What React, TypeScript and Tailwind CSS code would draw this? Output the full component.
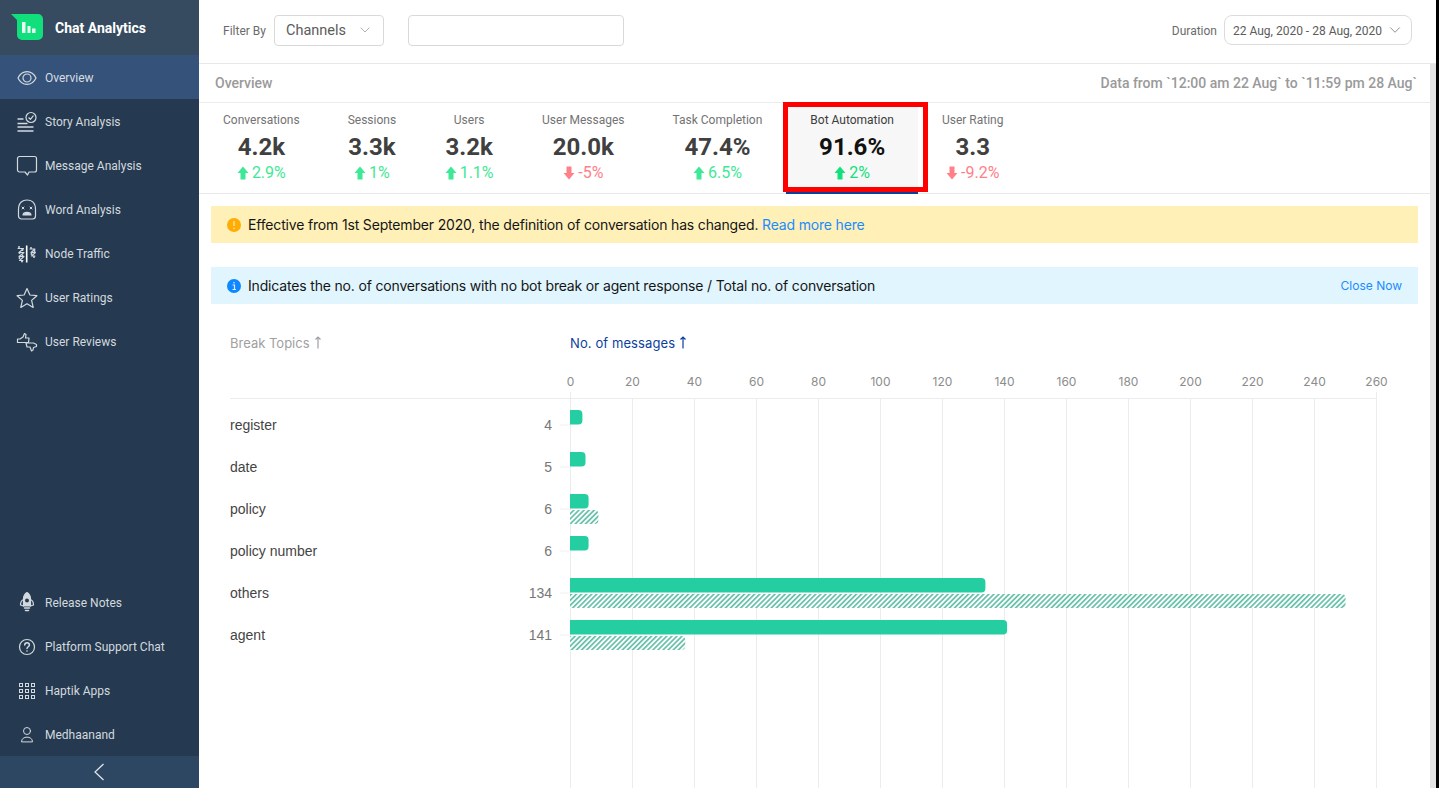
import React from "react";
import { ChevronDown } from "lucide-react";

const stroke = "#d3d9df";

function NavIcon({ children }: { children: React.ReactNode }) {
  return (
    <svg width="22" height="22" viewBox="0 0 22 22" fill="none" stroke={stroke} strokeWidth="1.2" strokeLinecap="round" strokeLinejoin="round" className="shrink-0">
      {children}
    </svg>
  );
}

const EyeIcon = () => (
  <NavIcon>
    <path d="M2 11 C6 2.500 16 2.500 20 11 C16 19.500 6 19.500 2 11Z" />
    <circle cx="11" cy="11" r="4" />
  </NavIcon>
);

const StoryIcon = () => (
  <NavIcon>
    <path d="M1.500 8h6M1.500 12.500h10M1.500 16h16M1.500 20h16" strokeWidth="1.600" strokeLinecap="butt" />
    <circle cx="15" cy="6.500" r="5" />
    <path d="M12.800 6.800l1.600 1.500 2.800-3.400" />
  </NavIcon>
);

const MessageIcon = () => (
  <NavIcon>
    <path d="M3.500 1.500H18.500a2 2 0 0 1 2 2V15a2 2 0 0 1-2 2H13L11.500 20 9 17H3.500a2 2 0 0 1-2-2V3.500a2 2 0 0 1 2-2Z" />
  </NavIcon>
);

const WordIcon = () => (
  <NavIcon>
    <path d="M2.500 10.500C2.500 3 7 1 11 1s8.500 2 8.500 9.500V17a3 3 0 0 1-3 3h-11a3 3 0 0 1-3-3Z" />
    <path d="M6 8l2 2M8 8l-2 2M14 8l2 2M16 8l-2 2" strokeWidth="1" />
    <path d="M7 16c.5-3.500 7.500-3.500 8 0Z" fill={stroke} />
  </NavIcon>
);

const NodeIcon = () => (
  <NavIcon>
    <path d="M10.700 2.500V19.500" strokeWidth="1.600" stroke="#ffffff" strokeLinecap="butt" />
    <path d="M2 5.500h5.500L3 9.500h5L3 13.500h5L3.500 17.500H7M14 6h5l-4 3.500h4.500l-4 3.500H19" strokeWidth="1.100" />
    {[[3, 4], [6.500, 7], [3.500, 10], [6.500, 12.500], [3.500, 15], [6, 18.500], [15, 5], [18.500, 8], [15.500, 11], [18, 14]].map(([cx, cy]) => (
      <circle key={`${cx}-${cy}`} cx={cx} cy={cy} r="1" fill={stroke} stroke="none" />
    ))}
  </NavIcon>
);

const StarIcon = () => (
  <NavIcon>
    <path d="M11 1.500l2.900 6.500 7 .7-5.300 4.700 1.600 7-6.200-3.700-6.200 3.700 1.600-7-5.300-4.700 7-.7Z" />
  </NavIcon>
);

const ReviewIcon = () => (
  <NavIcon>
    <path d="M1.500 8h2.500l3-2 1.500-3.500 1.500 1-.5 3.500h3.500l-.5 4.500H4L1.500 11.500Z" />
    <path d="M20.500 13.500l-3-1.500H10l1 4h3l1.500 4 1.500-1 .5-2.500 3-1Z" />
  </NavIcon>
);

const RocketIcon = () => (
  <NavIcon>
    <path d="M11 .5c2.500 1.500 3.500 4 3.500 6.500v7h-7V7c0-2.500 1-5 3.500-6.500Z" fill={stroke} />
    <path d="M7.500 7.500c-2.500 1-3 3-3 5.500l3 1M14.500 7.500c2.500 1 3 3 3 5.500l-3 1" />
    <circle cx="11" cy="8.500" r="2" fill="#253a50" stroke="none" />
    <path d="M8.500 16h5M9.500 18.500h3" strokeWidth="1.500" />
  </NavIcon>
);

const HelpIcon = () => (
  <NavIcon>
    <circle cx="11" cy="11" r="7.500" />
    <path d="M8.700 9c0-3 4.700-3 4.700 0 0 1.700-2.400 1.800-2.400 3.500" strokeWidth="1.500" />
    <circle cx="11" cy="15" r=".8" fill={stroke} stroke="none" />
  </NavIcon>
);

const GridIcon = () => (
  <NavIcon>
    {[3.500, 9.500, 15.500].map((y) =>
      [3.500, 9.500, 15.500].map((x) => <rect key={`${x}-${y}`} x={x} y={y} width="3" height="3" strokeWidth="1" strokeLinejoin="miter" />)
    )}
  </NavIcon>
);

const UserIcon = () => (
  <NavIcon>
    <circle cx="11" cy="7" r="3.500" strokeWidth="1" />
    <path d="M5.500 17.500c0-6 11-6 11 0Z" strokeWidth="1" />
  </NavIcon>
);

const topNav = [
  { label: "Story Analysis", icon: <StoryIcon /> },
  { label: "Message Analysis", icon: <MessageIcon /> },
  { label: "Word Analysis", icon: <WordIcon /> },
  { label: "Node Traffic", icon: <NodeIcon /> },
  { label: "User Ratings", icon: <StarIcon /> },
  { label: "User Reviews", icon: <ReviewIcon /> },
];

const bottomNav = [
  { label: "Release Notes", icon: <RocketIcon /> },
  { label: "Platform Support Chat", icon: <HelpIcon /> },
  { label: "Haptik Apps", icon: <GridIcon /> },
  { label: "Medhaanand", icon: <UserIcon /> },
];

function NavRow({ label, icon, active }: { label: string; icon: React.ReactNode; active?: boolean }) {
  return (
    <div className={active ? "flex h-11 items-center gap-[7px] bg-[#34527a] pt-[2px] pl-4 text-xs text-[#d8dde3]" : "flex h-11 items-center gap-[7px] pt-[2px] pl-4 text-xs text-[#d3d9df]"}>
      {icon}
      <span>{label}</span>
    </div>
  );
}

function Sidebar() {
  return (
    <aside className="flex h-full w-[199px] shrink-0 flex-col bg-[#253a50]">
      <div className="flex h-[55px] items-center gap-[11px] bg-[#364b5f] pl-[11px]">
        <svg width="33" height="28" viewBox="0 0 33 28" className="shrink-0">
          <path d="M0 0H27a5 5 0 0 1 5 5V21a5 5 0 0 1-5 5H11a5 5 0 0 1-5-5V6Z" fill="#10df7c" />
          <path d="M11 8h3.500v11H11ZM16.500 12h3v7h-3ZM21 14.500h3.500V19H21Z" fill="#e9fff4" />
        </svg>
        <span className="text-sm font-bold text-white">Chat Analytics</span>
      </div>
      <NavRow label="Overview" icon={<EyeIcon />} active />
      {topNav.map((item) => (
        <NavRow key={item.label} label={item.label} icon={item.icon} />
      ))}
      <div className="flex-1" />
      {bottomNav.map((item) => (
        <NavRow key={item.label} label={item.label} icon={item.icon} />
      ))}
      <div className="flex h-8 items-center justify-center bg-[#2d4762] pr-[2px]">
        <svg width="12" height="18" viewBox="0 0 12 18" fill="none" stroke="#e4e8ec" strokeWidth="1.2">
          <path d="M10.500 1L2 9l8.500 8" />
        </svg>
      </div>
    </aside>
  );
}

function Arrow({ up, color }: { up: boolean; color: string }) {
  return (
    <svg width="12" height="14" viewBox="0 0 12 14" className="shrink-0">
      <path d={up ? "M6 0.500L11.500 7H8.500V13.500H3.500V7H0.500Z" : "M6 13.500L11.500 7H8.500V0.500H3.500V7H0.500Z"} fill={color} />
    </svg>
  );
}

const kpis = [
  { label: "Conversations", value: "4.2k", delta: "2.9%", up: true },
  { label: "Sessions", value: "3.3k", delta: "1%", up: true },
  { label: "Users", value: "3.2k", delta: "1.1%", up: true },
  { label: "User Messages", value: "20.0k", delta: "-5%", up: false },
  { label: "Task Completion", value: "47.4%", delta: "6.5%", up: true },
  { label: "Bot Automation", value: "91.6%", delta: "2%", up: true, active: true },
  { label: "User Rating", value: "3.3", delta: "-9.2%", up: false },
];

function Kpi({ label, value, delta, up, active }: { label: string; value: string; delta: string; up: boolean; active?: boolean }) {
  const color = up ? (active ? "#12e07c" : "#3fe896") : "#ff8089";
  return (
    <div className={active ? "relative flex h-[90px] flex-col items-center bg-[#f7f7f7] px-6 pt-[10px]" : "flex h-[90px] flex-col items-center px-6 pt-[10px]"}>
      <span className={active ? "text-xs leading-[14px] text-[#3c3c3c]" : "text-xs leading-[14px] text-[#737373]"}>{label}</span>
      <span className={active ? "mt-[5px] text-2xl leading-[30px] font-bold text-[#111111]" : "mt-[5px] text-2xl leading-[30px] font-bold text-[#404040]"}>{value}</span>
      <span className="mt-[3px] flex items-center gap-[3px] px-[0.5px] text-base leading-[16px]" style={{ color }}>
        <Arrow up={up} color={color} />
        {delta}
      </span>
      {active && (
        <>
          <div className="absolute right-0 bottom-[-1px] left-0 h-[2px] bg-[#0b3f9e]" />
          <div className="absolute top-[-1px] right-[-10px] bottom-[1px] left-[-3px] border-[5px] border-[#ff0000]" />
        </>
      )}
    </div>
  );
}

function SortArrow({ color }: { color: string }) {
  return (
    <svg width="8" height="13" viewBox="0 0 8 13" fill="none" stroke={color} strokeWidth="1.200" className="mb-[3px] ml-[4px] inline-block">
      <path d="M4 12.500V1M1.500 3.500L4 1L6.500 3.500" />
    </svg>
  );
}

const rows = [
  { label: "register", count: 4, prev: 0 },
  { label: "date", count: 5, prev: 0 },
  { label: "policy", count: 6, prev: 9 },
  { label: "policy number", count: 6, prev: 0 },
  { label: "others", count: 134, prev: 250 },
  { label: "agent", count: 141, prev: 37 },
];

const ticks = Array.from({ length: 14 }, (_, i) => i * 20);
const xOf = (v: number) => 10.5 + v * 3.1;

function barPath(w: number, y: number, h: number) {
  const r = 4;
  return `M10 ${y}H${w - r}a${r} ${r} 0 0 1 ${r} ${r}V${y + h - r}a${r} ${r} 0 0 1 -${r} ${r}H10Z`;
}

function Chart() {
  return (
    <svg width="870" height="418" viewBox="0 0 870 418" className="block shrink-0" fontFamily="Inter, sans-serif">
      <defs>
        <pattern id="hatch" width="3.600" height="3.600" patternUnits="userSpaceOnUse" patternTransform="rotate(45)">
          <rect width="3.600" height="3.600" fill="#ffffff" />
          <rect width="1.700" height="3.600" fill="#66bfa9" />
        </pattern>
      </defs>
      {ticks.map((t) => (
        <g key={t}>
          <line x1={xOf(t)} x2={xOf(t)} y1={t === 0 || t === 260 ? 22 : 28} y2="418" stroke="#ececec" />
          <text x={xOf(t)} y="16" textAnchor="middle" fontSize="12" fill="#8c8c8c">
            {t}
          </text>
        </g>
      ))}
      <line x1="0" x2={xOf(260)} y1="28.500" y2="28.500" stroke="#ececec" />
      {rows.map((r, i) => {
        const top = 40 + i * 42;
        return (
          <g key={r.label}>
            <line x1="0" x2="10" y1={top + 15} y2={top + 15} stroke="#f0f0f0" />
            <path d={barPath(xOf(r.count) - 0.5, top, 14.500)} fill="#25cea0" />
            {r.prev > 0 && <path d={barPath(xOf(r.prev), top + 16, 14)} fill="url(#hatch)" />}
          </g>
        );
      })}
    </svg>
  );
}

function Banner({ className, children }: { className: string; children: React.ReactNode }) {
  return (
    <div className={`${className} mx-3 flex h-[37px] items-center px-4 font-['Inter',sans-serif] text-sm tracking-[-0.17px] text-[#151515]`}>{children}</div>
  );
}

export default function App() {
  return (
    <div className="flex h-[788px] w-[1439px] overflow-hidden bg-black font-['Roboto',sans-serif]">
      <Sidebar />
      <main className="flex h-full w-[1237px] shrink-0 flex-col bg-white">
        <header className="flex h-[64px] shrink-0 items-center border-b border-[#e8e8e8] pr-6 pb-[3px] pl-6">
          <span className="mt-[2px] mr-2 text-xs text-[#6b6b6b]">Filter By</span>
          <div className="flex h-[31px] w-[110px] items-center justify-between rounded border border-[#d9d9d9] pr-[10px] pl-[11px] text-[14.5px] text-[#5c5c5c]">
            <span className="mt-[2px]">Channels</span>
            <ChevronDown size={16} strokeWidth={1} color="#8a8a8a" />
          </div>
          <div className="ml-6 h-[31px] w-[216px] rounded border border-[#d9d9d9]" />
          <div className="flex-1" />
          <span className="mt-[2px] mr-[7px] text-xs text-[#6b6b6b]">Duration</span>
          <div className="flex h-[30px] w-[188px] items-center justify-between rounded-lg border border-[#dcdcdc] pr-[7px] pl-2 text-xs text-[#5c5c5c]">
            <span className="mt-[1px]">22 Aug, 2020 - 28 Aug, 2020</span>
            <ChevronDown size={18} strokeWidth={1} color="#6b6b6b" />
          </div>
        </header>
        <div className="flex min-h-0 flex-1">
          <div className="flex min-w-0 flex-1 flex-col">
            <div className="flex h-[39px] shrink-0 items-center justify-between border-b border-[#ececec] pr-[13px] pl-4 text-sm font-medium text-[#9a9a9a]">
              <span>Overview</span>
              <span>Data from `12:00 am 22 Aug` to `11:59 pm 28 Aug`</span>
            </div>
            <div className="flex h-[91px] shrink-0 border-b border-[#e8e8e8]">
              {kpis.map((k) => (
                <Kpi key={k.label} {...k} />
              ))}
            </div>
            <Banner className="mt-3 bg-[#fff0b8]">
              <svg width="14" height="14" viewBox="0 0 14 14" className="mr-[7px] shrink-0">
                <circle cx="7" cy="7" r="7" fill="#ffac05" />
                <path d="M7 3v5" stroke="#ffe08a" strokeWidth="1.500" />
                <circle cx="7" cy="10.300" r=".9" fill="#ffe08a" />
              </svg>
              <span>
                Effective from 1st September 2020, the definition of conversation has changed. <span className="text-[#1a8cff]">Read more here</span>
              </span>
            </Banner>
            <Banner className="mt-6 bg-[#e1f5fe]">
              <svg width="14" height="14" viewBox="0 0 14 14" className="mr-[7px] shrink-0">
                <circle cx="7" cy="7" r="7" fill="#0f87ff" />
                <path d="M5.500 6h2v4.500M5.500 10.500h3.500" stroke="#d6ecff" strokeWidth="1.200" fill="none" />
                <circle cx="7" cy="3.800" r=".8" fill="#d6ecff" />
              </svg>
              <span className="flex-1">Indicates the no. of conversations with no bot break or agent response / Total no. of conversation</span>
              <span className="text-xs tracking-normal text-[#1a8cff]">Close Now</span>
            </Banner>
            <div className="min-h-0 flex-1 pl-[31px] font-['Inter',sans-serif]">
              <div className="mt-[29px] flex h-[22px] items-center text-[13px]">
                <span className="flex w-[340px] items-center text-[#a0a0a0]">
                  Break Topics
                  <SortArrow color="#a0a0a0" />
                </span>
                <span className="flex items-center tracking-[0.1px] text-[#0b3f9e]">
                  No. of messages
                  <SortArrow color="#0b3f9e" />
                </span>
              </div>
              <div className="mt-[15px] flex">
                <div className="w-[330px] shrink-0">
                  <div className="h-[29px] border-b border-[#ececec]" />
                  <div className="pt-[5px] font-['Liberation_Sans',sans-serif]">
                    {rows.map((r) => (
                      <div key={r.label} className="flex h-[42px] items-center justify-between pr-2 text-sm text-[#444444]">
                        <span>{r.label}</span>
                        <span className="text-[#777777]">{r.count}</span>
                      </div>
                    ))}
                  </div>
                </div>
                <Chart />
              </div>
            </div>
          </div>
          <div className="w-[6px] shrink-0 bg-[#e3e3e3]" />
        </div>
      </main>
    </div>
  );
}
